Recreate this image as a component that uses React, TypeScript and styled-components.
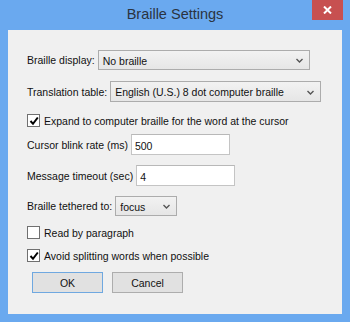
import React from 'react'
import styled, { createGlobalStyle } from 'styled-components';

const GlobalStyle = createGlobalStyle`
    html, body {
        margin: 0;
        padding: 0;
        background: #6aa9ef;
    }
`;

const Window = styled.div`
    width: 350px;
    height: 322px;
    box-sizing: border-box;
    background: #6aa9ef;
    padding: 0 8px 8px 8px;
    display: flex;
    flex-direction: column;
    font-family: "Liberation Sans", Arial, sans-serif;
    font-size: 10.5px;
    color: #111;
`;

const TitleBar = styled.div`
    height: 30px;
    display: flex;
    align-items: center;
    justify-content: center;
    position: relative;
    font-size: 14.5px;
    color: #2b3440;
    padding-bottom: 2px;
    box-sizing: border-box;
`;

const CloseButton = styled.div`
    position: absolute;
    top: 0;
    right: -1px;
    width: 31px;
    height: 20px;
    background: #c75050;
    display: flex;
    align-items: center;
    justify-content: center;
`;

const Client = styled.div`
    flex: 1;
    background: #f0f0f0;
    padding: 0 19px;
    display: flex;
    flex-direction: column;
`;

const Row = styled.div<{ $top: number; $height?: number }>`
    display: flex;
    align-items: center;
    margin-top: ${p => p.$top}px;
    height: ${p => p.$height ?? 20}px;
    white-space: nowrap;
`;

const Label = styled.span`
    margin-right: 3px;
`;

const Select = styled.div<{ $width: number; $height?: number }>`
    width: ${p => p.$width}px;
    height: ${p => p.$height ?? 20}px;
    box-sizing: border-box;
    border: 1px solid #acacac;
    background: linear-gradient(#f2f2f2, #e6e6e6);
    display: flex;
    align-items: center;
    justify-content: space-between;
    padding: 1px 6px 0 4px;
`;

const TextInput = styled.div<{ $width: number }>`
    width: ${p => p.$width}px;
    height: 21px;
    box-sizing: border-box;
    border: 1px solid #c4c4c4;
    border-top-color: #b8b8b8;
    background: #fff;
    display: flex;
    align-items: center;
    padding: 2px 3px 0;
`;

const Box = styled.span`
    width: 13px;
    height: 13px;
    box-sizing: border-box;
    border: 1px solid #707070;
    background: #fff;
    margin-right: 4px;
    display: flex;
    align-items: center;
    justify-content: center;
`;

const Buttons = styled.div`
    display: flex;
    gap: 9px;
    margin-top: 10px;
    padding-left: 5px;
`;

const Button = styled.div<{ $default?: boolean }>`
    width: 71px;
    height: 21px;
    box-sizing: border-box;
    border: 1px solid ${p => (p.$default ? '#6fa8e0' : '#adadad')};
    background: #e1e1e1;
    display: flex;
    align-items: center;
    justify-content: center;
`;

const Chevron = () => (
    <svg width="7" height="5" viewBox="0 0 7 5">
        <path d="M0.5 1 L3.5 4 L6.5 1" fill="none" stroke="#555" strokeWidth="1.4"/>
    </svg>
);

const Check = () => (
    <svg width="10" height="10" viewBox="0 0 10 10">
        <path d="M1.5 5 L4 7.8 L8.8 1.5" fill="none" stroke="#000" strokeWidth="2"/>
    </svg>
);

const Checkbox = ({ checked, label, top }: { checked?: boolean; label: string; top: number }) => (
    <Row $top={top} $height={13}>
        <Box>{checked && <Check/>}</Box>
        <span>{label}</span>
    </Row>
);

export default () => (
    <Window>
        <GlobalStyle/>
        <TitleBar>
            Braille Settings
            <CloseButton>
                <svg width="9" height="8" viewBox="0 0 9 8">
                    <path d="M1 0.5 L8 7.5 M8 0.5 L1 7.5" stroke="#fff" strokeWidth="2"/>
                </svg>
            </CloseButton>
        </TitleBar>
        <Client>
            <Row $top={20}>
                <Label>Braille display:</Label>
                <Select $width={212}>No braille<Chevron/></Select>
            </Row>
            <Row $top={11} $height={21}>
                <Label>Translation table:</Label>
                <Select $width={211} $height={21}>English (U.S.) 8 dot computer braille<Chevron/></Select>
            </Row>
            <Checkbox checked top={12} label="Expand to computer braille for the word at the cursor"/>
            <Row $top={7} $height={21}>
                <Label>Cursor blink rate (ms)</Label>
                <TextInput $width={99}>500</TextInput>
            </Row>
            <Row $top={10} $height={21}>
                <Label>Message timeout (sec)</Label>
                <TextInput $width={99}>4</TextInput>
            </Row>
            <Row $top={10}>
                <Label>Braille tethered to:</Label>
                <Select $width={62}>focus<Chevron/></Select>
            </Row>
            <Checkbox top={10} label="Read by paragraph"/>
            <Checkbox checked top={10} label="Avoid splitting words when possible"/>
            <Buttons>
                <Button $default>OK</Button>
                <Button>Cancel</Button>
            </Buttons>
        </Client>
    </Window>
)
